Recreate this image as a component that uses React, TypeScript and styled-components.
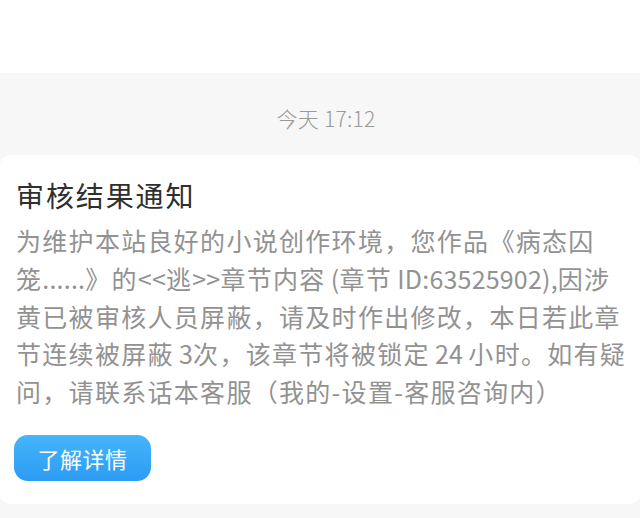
import React from "react";
import styled, { createGlobalStyle } from "styled-components";

const GlobalStyle = createGlobalStyle`
  html, body {
    margin: 0;
    padding: 0;
    background: #ffffff;
    font-family: "Noto Sans CJK SC", "Noto Sans", sans-serif;
  }
  #root {
    width: 640px;
    height: 518px;
    overflow: hidden;
  }
`;

const Page = styled.div`
  width: 640px;
  height: 518px;
  display: flex;
  flex-direction: column;
  background: #f7f7f7;
  overflow: hidden;
`;

const TopBar = styled.div`
  height: 73px;
  background: #ffffff;
  flex-shrink: 0;
`;

const TimeRow = styled.div`
  height: 82px;
  display: flex;
  align-items: center;
  justify-content: center;
  padding-left: 12px;
  padding-top: 8px;
  box-sizing: border-box;
  font-size: 21px;
  font-weight: 300;
  color: #999999;
  letter-spacing: 0.3px;
`;

const Card = styled.div`
  background: #ffffff;
  border-radius: 10px;
  height: 349px;
  padding: 20px 0 0 16px;
  box-sizing: border-box;
  display: flex;
  flex-direction: column;
  align-items: flex-start;
`;

const Title = styled.div`
  font-size: 28px;
  line-height: 40px;
  letter-spacing: 1.9px;
  color: #2f2f2f;
`;

const Body = styled.div`
  margin-top: 7px;
  font-size: 25px;
  line-height: 37.8px;
  letter-spacing: 1.3px;
  color: #929292;
`;

const Line = styled.span`
  display: block;
  white-space: nowrap;
`;

const Latin = styled.span`
  letter-spacing: 0.2px;
`;

const DetailButton = styled.button`
  margin-top: 24px;
  margin-left: -2px;
  width: 137px;
  height: 46px;
  border: none;
  border-radius: 14px;
  background: linear-gradient(180deg, #46b5fb 0%, #2b9cf3 100%);
  color: #ffffff;
  font-family: "Noto Sans CJK SC", "Noto Sans", sans-serif;
  font-size: 22px;
  letter-spacing: 0.5px;
  padding: 0;
`;

export default function App() {
  return (
    <>
      <GlobalStyle />
      <Page>
        <TopBar />
        <TimeRow>今天 17:12</TimeRow>
        <Card>
          <Title>审核结果通知</Title>
          <Body>
            <Line>为维护本站良好的小说创作环境，您作品《病态囚</Line>
            <Line>
              笼<Latin>......</Latin>》的<Latin>&lt;&lt;</Latin>逃<Latin>&gt;&gt;</Latin>章节内容<Latin>{"\u2009("}</Latin>章节<Latin>{"\u2009ID:63525902),"}</Latin>因涉
            </Line>
            <Line>黄已被审核人员屏蔽，请及时作出修改，本日若此章</Line>
            <Line>
              节连续被屏蔽<Latin>{"\u20093"}</Latin>次，该章节将被锁定<Latin>{"\u200924\u2009"}</Latin>小时。如有疑
            </Line>
            <Line>问，请联系话本客服（我的-设置-客服咨询内）</Line>
          </Body>
          <DetailButton>了解详情</DetailButton>
        </Card>
      </Page>
    </>
  );
}
